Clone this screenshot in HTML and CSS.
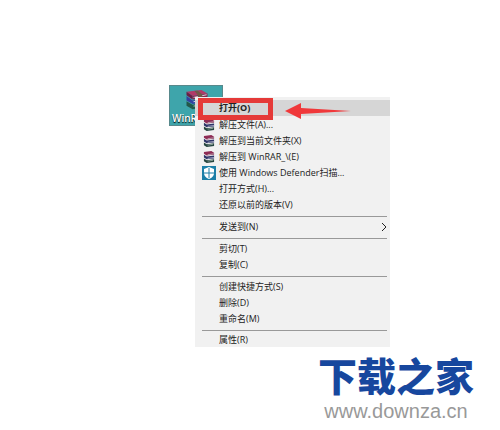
FILE: index.html
```html
<!DOCTYPE html>
<html lang="zh-CN">
<head>
  <meta charset="UTF-8">
  <meta name="viewport" content="width=device-width, initial-scale=1.0">
  <title>打开 WinRAR</title>
  <link rel="stylesheet" href="styles.css">
</head>
<body>
<!-- 压缩包图标 -->
<svg width="0" height="0" class="defs">
  <symbol id="books" viewBox="0 0 26 24">
    <path d="M1 3 L18 1 L25 5 L8 8 Z" fill="#b03a68"/>
    <path d="M1 3 L8 8 V12 L1 7 Z" fill="#6b1c44"/>
    <path d="M8 8 L25 5 V9 L8 12 Z" fill="#82284f"/>
    <path d="M9 9 L24 6 V7 L9 10 Z" fill="#e6dbe2"/>
    <path d="M1 8 L8 13 L25 10 V14 L8 17 L1 13 Z" fill="#3340a0"/>
    <path d="M9 14 L24 11 V12 L9 15 Z" fill="#d5daf0"/>
    <path d="M1 14 L8 18 L25 15 V20 L8 23 L1 19 Z" fill="#23584a"/>
    <path d="M9 19 L24 16 V18 L9 20 Z" fill="#c9ddd4"/>
    <path d="M10 2 L14 2 L19 6 V21 L14 22 V7 Z" fill="#6f5a48"/>
    <path d="M14 11 L19 10 V15 L14 16 Z" fill="#d8cba6"/>
  </symbol>
  <symbol id="books-small" viewBox="0 0 13 13">
    <path d="M1 1 L9 0 L12 2 V4 L4 5 L1 3 Z" fill="#8f2c55"/>
    <path d="M5 4 L12 3" stroke="#b9a3b0"/>
    <path d="M1 4 L4 6 L12 5 V8 L4 9 L1 7 Z" fill="#2f3568"/>
    <path d="M5 8 L12 7" stroke="#a3a8c0"/>
    <path d="M1 8 L4 10 L12 9 V12 L4 13 L1 11 Z" fill="#26453f"/>
    <path d="M5 11 L11 10" stroke="#8fa59d"/>
  </symbol>
</svg>
<main class="desktop">
  <div class="shortcut">
    <svg class="shortcut-icon"><use href="#books"/></svg>
    <span>WinRAR</span>
    <div class="menu">
      <button class="item active">打开(O)</button>
      <button class="item"><svg class="icon"><use href="#books-small"/></svg>解压文件(A)...</button>
      <button class="item"><svg class="icon"><use href="#books-small"/></svg>解压到当前文件夹(X)</button>
      <button class="item"><svg class="icon"><use href="#books-small"/></svg>解压到 WinRAR_\(E)</button>
      <button class="item"><svg class="icon shield" viewBox="0 0 14 14"><path d="M0 0H14V14H0Z" fill="#1c7fa8"/><path d="M7 1 L12 3 V7 Q12 11 7 13 Q2 11 2 7 V3 Z" fill="#fff"/><path d="M7 2V12M2 7H12" stroke="#1c7fa8"/></svg>使用 Windows Defender扫描...</button>
      <button class="item">打开方式(H)...</button>
      <button class="item">还原以前的版本(V)</button>
      <hr>
      <button class="item">发送到(N)<svg class="more" viewBox="0 0 6 10"><path d="M1 1 L5 5 L1 9" fill="none" stroke="#222"/></svg></button>
      <hr>
      <button class="item">剪切(T)</button>
      <button class="item">复制(C)</button>
      <hr>
      <button class="item">创建快捷方式(S)</button>
      <button class="item">删除(D)</button>
      <button class="item">重命名(M)</button>
      <hr>
      <button class="item last">属性(R)</button>
      <div class="mark"></div>
      <svg class="arrow" viewBox="0 0 66 16"><path d="M0 8 L16 0 V5 L66 8 L16 11 V16 Z" fill="#f0383a"/></svg>
    </div>
  </div>
</main>
<footer class="brand">
  <div class="brand-name">下载之家</div>
  <div class="brand-url">www.downza.cn</div>
</footer>
</body>
</html>
```
FILE: styles.css
```css
* {
  box-sizing: border-box;
}
body {
  margin: 0;
  min-height: 100vh;
  display: flex;
  flex-direction: column;
  background: #fff;
  font-family: "Open Sans", "Noto Sans CJK SC", sans-serif;
}
.defs {
  position: absolute;
}
.desktop {
  padding: 85px 0 0 169px;
}
.shortcut {
  position: relative;
  width: 54px;
  height: 41px;
  padding: 3px 0 0 2px;
  background: #3ea5ab;
  border: 1px solid #58898c;
  color: #fff;
  font-size: 10px;
  font-weight: 600;
  line-height: 16px;
  text-shadow: 0 1px 1px #000;
}
.shortcut-icon {
  display: block;
  width: 26px;
  height: 21px;
  margin-left: 12px;
}
/* 右键菜单 */
.menu {
  position: absolute;
  top: 11px;
  left: 25px;
  width: 195px;
  padding: 3px 0 0;
  background: #f1f1f1;
  text-shadow: none;
}
.item {
  display: flex;
  align-items: center;
  position: relative;
  width: 100%;
  height: 16px;
  padding: 0 0 0 24px;
  border: none;
  background: none;
  color: #222;
  font-family: inherit;
  font-size: 9px;
  line-height: 16px;
  white-space: pre;
}
.active {
  margin-bottom: 1px;
  background: #d6d6d6;
  font-weight: bold;
}
.last {
  height: 14px;
}
.icon {
  position: absolute;
  left: 8px;
  width: 12px;
  height: 12px;
}
.shield {
  left: 7px;
  width: 14px;
  height: 14px;
}
.more {
  width: 6px;
  height: 10px;
  margin: 0 3px 0 auto;
}
hr {
  height: 1px;
  margin: 3px 3px 2px 7px;
  border: none;
  background: #999;
}
/* 红框和箭头 */
.mark {
  position: absolute;
  top: 1px;
  left: 3px;
  width: 75px;
  height: 22px;
  border: 5px solid #e53a38;
}
.arrow {
  position: absolute;
  top: 6px;
  left: 90px;
  width: 66px;
  height: 16px;
}
.brand {
  margin: auto 26px 6px auto;
  text-align: center;
}
.brand-name {
  color: #17479e;
  font-family: "Noto Sans CJK SC", sans-serif;
  font-size: 39px;
  font-weight: 900;
  line-height: 48px;
}
.brand-url {
  color: #999;
  font-family: "Liberation Sans", sans-serif;
  font-size: 20px;
  line-height: 26px;
}
```
